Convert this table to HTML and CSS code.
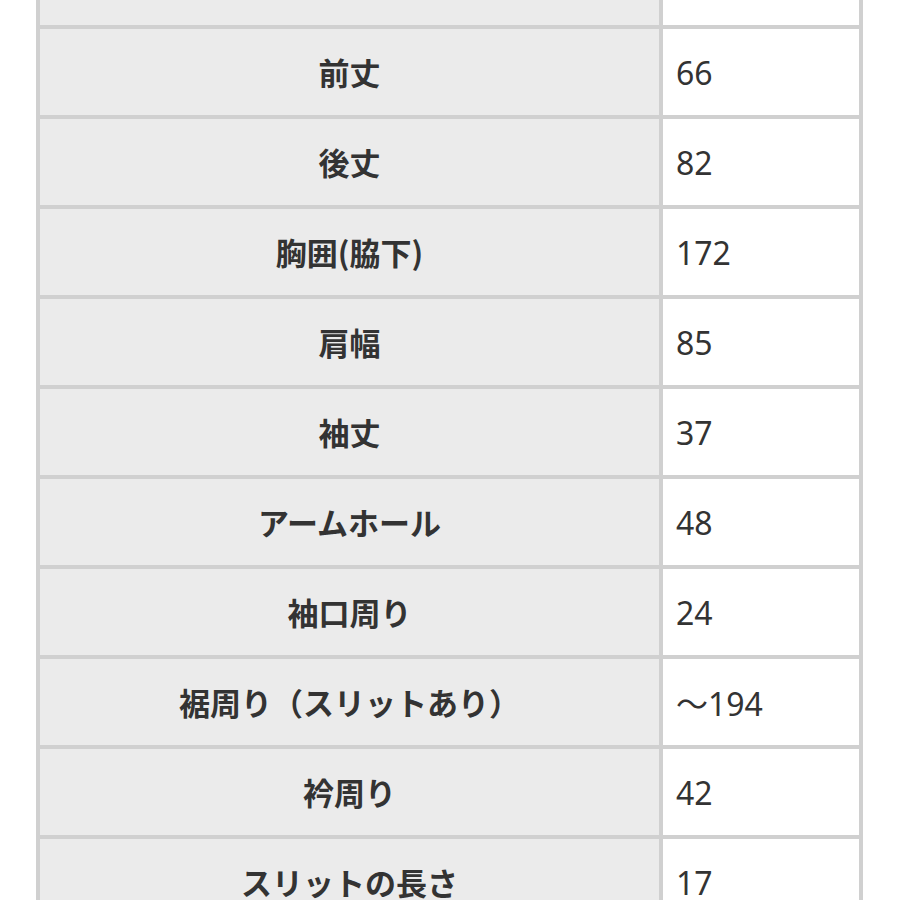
FILE: index.html
```html
<!DOCTYPE html>
<html lang="ja">
<head>
<meta charset="utf-8">
<link rel="stylesheet" href="styles.css">
</head>
<body>
<div class="sheet">
  <div class="label"></div><div class="value"></div>
  <div class="label">前丈</div><div class="value">66</div>
  <div class="label">後丈</div><div class="value">82</div>
  <div class="label">胸囲(脇下)</div><div class="value">172</div>
  <div class="label">肩幅</div><div class="value">85</div>
  <div class="label">袖丈</div><div class="value">37</div>
  <div class="label">アームホール</div><div class="value">48</div>
  <div class="label">袖口周り</div><div class="value">24</div>
  <div class="label">裾周り（スリットあり）</div><div class="value">～194</div>
  <div class="label">衿周り</div><div class="value">42</div>
  <div class="label">スリットの長さ</div><div class="value">17</div>
</div>
</body>
</html>
```
FILE: styles.css
```css
html, body {
  margin: 0;
  padding: 0;
  background: #ffffff;
}
.sheet {
  margin: -61px 0 0 36px;
  width: 827px;
  box-sizing: border-box;
  display: grid;
  grid-template-columns: 619px 196px;
  grid-auto-rows: 86px;
  gap: 4px;
  padding: 0 4px 4px 4px;
  background: #d0d0d0;
}
.label {
  background: #ebebeb;
  display: flex;
  align-items: center;
  justify-content: center;
  font-family: "Noto Sans CJK JP", "Noto Sans", sans-serif;
  font-weight: 700;
  font-size: 31px;
  color: #333333;
  padding-bottom: 2px;
  box-sizing: border-box;
}
.value {
  background: #ffffff;
  display: flex;
  align-items: center;
  padding-left: 13px;
  font-family: "Noto Sans", "Noto Sans CJK JP", sans-serif;
  font-size: 32px;
  color: #333333;
}
```
